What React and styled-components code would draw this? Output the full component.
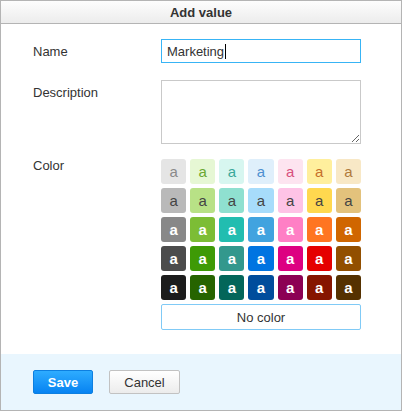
import React from "react";
import styled, { createGlobalStyle } from "styled-components";

const Global = createGlobalStyle`
  html, body { margin: 0; padding: 0; background: #fff; }
  body { font-family: "Liberation Sans", Arial, sans-serif; }
  * { box-sizing: border-box; }
`;

const Dialog = styled.div`
  width: 402px;
  height: 411px;
  border: 1px solid #b4b4b4;
  display: flex;
  flex-direction: column;
  background: #fff;
`;

const Header = styled.div`
  height: 23px;
  flex: none;
  border-bottom: 1px solid #b4b4b4;
  background: linear-gradient(#fdfdfd, #ececec);
  display: flex;
  align-items: center;
  justify-content: center;
  font-size: 13px;
  font-weight: bold;
  color: #333;
`;

const Body = styled.div`
  flex: 1;
  padding: 15px 40px 0 32px;
  display: flex;
  flex-direction: column;
`;

const Row = styled.div`
  display: grid;
  grid-template-columns: 128px 200px;
  margin-bottom: ${(p) => p.$mb || 0}px;
`;

const Label = styled.div`
  font-size: 13px;
  line-height: 16px;
  color: #333;
  margin-top: ${(p) => p.$offset || 0}px;
`;

const FakeInput = styled.div`
  height: 24px;
  border: 1px solid #38b4f5;
  padding: 0 5px;
  display: flex;
  align-items: center;
  font-size: 13px;
  color: #333;
`;

const Caret = styled.span`
  display: inline-block;
  width: 1px;
  height: 15px;
  background: #000;
  margin-left: 1px;
`;

const TextArea = styled.textarea`
  width: 200px;
  height: 64px;
  border: 1px solid #c9c9c9;
  margin: 0;
  padding: 3px 5px;
  font-family: inherit;
  font-size: 13px;
  outline: none;
  display: block;
`;

const Palette = styled.div`
  display: flex;
  flex-direction: column;
  gap: 4px;
`;

const Grid = styled.div`
  display: grid;
  grid-template-columns: repeat(7, 1fr);
  grid-auto-rows: 25px;
  gap: 4px;
`;

const Swatch = styled.div`
  background: ${(p) => p.$bg};
  color: ${(p) => p.$fg};
  font-weight: ${(p) => (p.$bold ? "bold" : "normal")};
  border-radius: 3px;
  display: flex;
  align-items: center;
  justify-content: center;
  font-size: 15px;
  line-height: 1;
  padding-bottom: 1px;
`;

const NoColor = styled.button`
  height: 26px;
  width: 200px;
  border: 1px solid #80caf6;
  border-radius: 2px;
  background: #fff;
  font-family: inherit;
  font-size: 13px;
  color: #333;
  padding: 0;
`;

const Footer = styled.div`
  height: 56px;
  flex: none;
  background: #e9f6fe;
  display: flex;
  align-items: flex-start;
  padding: 16px 0 0 32px;
  gap: 16px;
`;

const Button = styled.button`
  height: 24px;
  width: ${(p) => p.$w}px;
  border-radius: 2px;
  font-family: inherit;
  font-size: 13px;
  padding: 0;
  cursor: pointer;
  border: 1px solid ${(p) => (p.$primary ? "#0d7fe0" : "#c2c2c2")};
  background: ${(p) =>
    p.$primary
      ? "linear-gradient(#2eacff, #0783f2)"
      : "linear-gradient(#ffffff, #ececec)"};
  color: ${(p) => (p.$primary ? "#fff" : "#333")};
  font-weight: ${(p) => (p.$primary ? "bold" : "normal")};
`;

const rows = [
  [
    ["#e5e5e5", "#8a8a8a"],
    ["#e6f7d4", "#6aa832"],
    ["#d7f6f0", "#3aa89a"],
    ["#dfeffb", "#4d8fd0"],
    ["#fde4f0", "#d8507e"],
    ["#ffef9d", "#c6702a"],
    ["#f8e8c6", "#b07a3c"],
  ],
  [
    ["#b9b9b9", "#444"],
    ["#b8e186", "#444"],
    ["#8fe0d0", "#444"],
    ["#a7dcfb", "#444"],
    ["#fec3e6", "#444"],
    ["#ffd84f", "#444"],
    ["#e3c27c", "#444"],
  ],
  [
    ["#888888", "#fff"],
    ["#7cbd35", "#fff"],
    ["#22bdb0", "#fff"],
    ["#41a3df", "#fff"],
    ["#ff7fc5", "#fff"],
    ["#ff7522", "#fff"],
    ["#d06600", "#fff"],
  ],
  [
    ["#4c4c4c", "#fff"],
    ["#3e9a06", "#fff"],
    ["#33988d", "#fff"],
    ["#0074e1", "#fff"],
    ["#dd0081", "#fff"],
    ["#e50000", "#fff"],
    ["#924f00", "#fff"],
  ],
  [
    ["#1c1c1c", "#fff"],
    ["#266400", "#fff"],
    ["#03665a", "#fff"],
    ["#004d9c", "#fff"],
    ["#8c0054", "#fff"],
    ["#861500", "#fff"],
    ["#553100", "#fff"],
  ],
];

export default function App() {
  return (
    <>
      <Global />
      <Dialog>
        <Header>Add value</Header>
        <Body>
          <Row $mb={17}>
            <Label $offset={5}>Name</Label>
            <FakeInput>
              Marketing
              <Caret />
            </FakeInput>
          </Row>
          <Row $mb={15}>
            <Label $offset={5}>Description</Label>
            <TextArea />
          </Row>
          <Row>
            <Label $offset={-1}>Color</Label>
            <Palette>
              <Grid>
                {rows.map((row, r) =>
                  row.map(([bg, fg], i) => (
                    <Swatch key={`${r}-${i}`} $bg={bg} $fg={fg} $bold={r >= 2}>
                      a
                    </Swatch>
                  ))
                )}
              </Grid>
              <NoColor>No color</NoColor>
            </Palette>
          </Row>
        </Body>
        <Footer>
          <Button $primary $w={60}>
            Save
          </Button>
          <Button $w={71}>Cancel</Button>
        </Footer>
      </Dialog>
    </>
  );
}
